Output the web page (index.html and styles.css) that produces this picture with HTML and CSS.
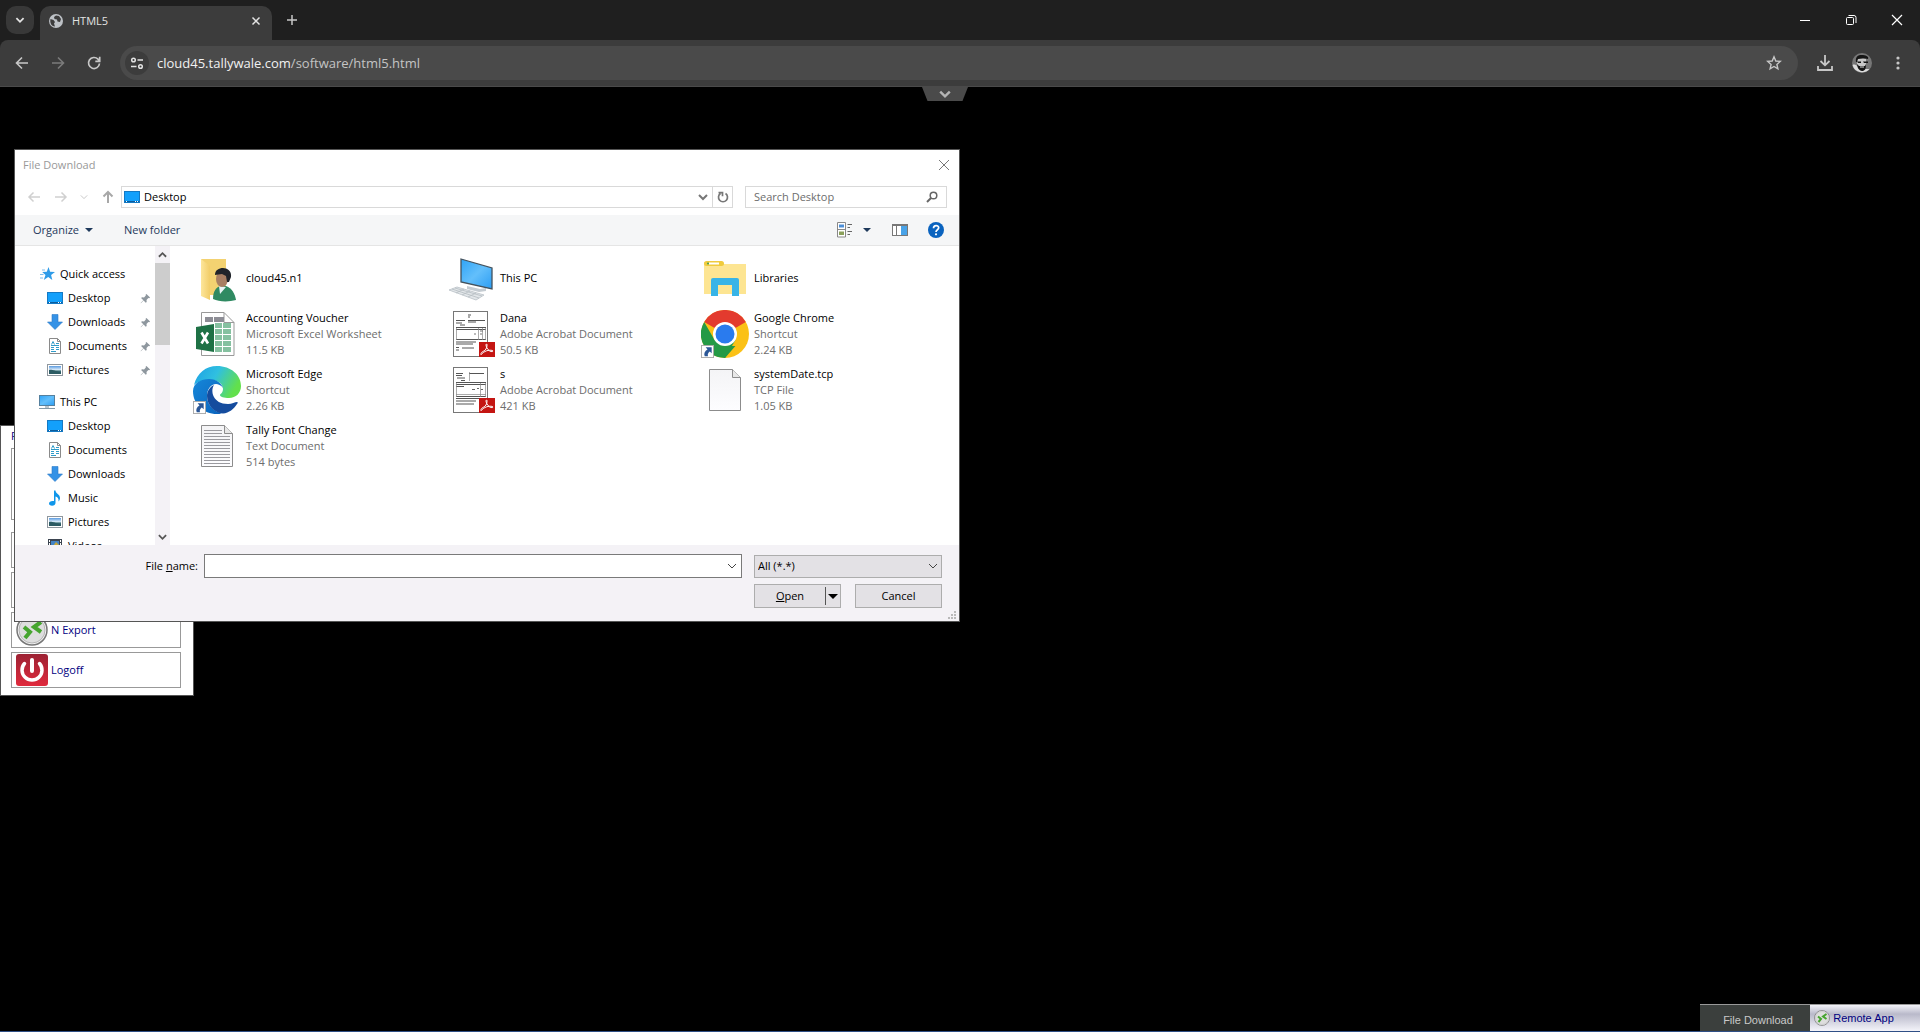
FILE: index.html
```html
<!DOCTYPE html>
<html lang="en">
<head>
    <meta charset="UTF-8">
    <meta name="viewport" content="width=device-width, initial-scale=1.0">
    <title>HTML5</title>
    <link rel="stylesheet" href="styles.css">
</head>
<body>
    <!-- shared icons -->
    <svg class="sprite" aria-hidden="true">
        <defs>
            <linearGradient id="screen" x1="0" y1="0" x2="1" y2="1">
                <stop offset="0" stop-color="#2ea3f7"/><stop offset="0.5" stop-color="#63bffb"/><stop offset="1" stop-color="#2b9df4"/>
            </linearGradient>
            <linearGradient id="paper" x1="0" y1="0" x2="0" y2="1">
                <stop offset="0" stop-color="#f4f4f6"/><stop offset="1" stop-color="#fdfdff"/>
            </linearGradient>
            <linearGradient id="sky" x1="0" y1="0" x2="0" y2="1">
                <stop offset="0" stop-color="#5a9be0"/><stop offset="0.5" stop-color="#e4f1fb"/><stop offset="0.6" stop-color="#3f7479"/><stop offset="1" stop-color="#2a5068"/>
            </linearGradient>
            <linearGradient id="edgeTop" x1="0" y1="0" x2="1" y2="0.4">
                <stop offset="0" stop-color="#1c9fe6"/><stop offset="0.5" stop-color="#30c0e0"/><stop offset="1" stop-color="#62e04c"/>
            </linearGradient>
            <linearGradient id="edgeLeft" x1="0" y1="0" x2="1" y2="1">
                <stop offset="0" stop-color="#1687d9"/><stop offset="1" stop-color="#0a63bd"/>
            </linearGradient>
            <linearGradient id="redBox" x1="0" y1="0" x2="0" y2="1">
                <stop offset="0" stop-color="#9c2233"/><stop offset="1" stop-color="#e02a3d"/>
            </linearGradient>
            <linearGradient id="folder" x1="0" y1="0" x2="1" y2="0">
                <stop offset="0" stop-color="#fde69b"/><stop offset="1" stop-color="#f2cd68"/>
            </linearGradient>
        </defs>
        <symbol id="i-desktop" viewBox="0 0 16 16">
            <rect x="0.5" y="2.5" width="15" height="11" fill="#13a0fb" stroke="#1479c4"/>
            <path d="M1 12.5h14" stroke="#0c5c9c"/>
            <path d="M2 12.5h1M11 12.5h1M13 12.5h1" stroke="#fff"/>
        </symbol>
        <symbol id="i-download" viewBox="0 0 16 16">
            <path d="M5 0.5h6v7.5h4.5L8 15.5 0.5 8H5z" fill="#3592e6" stroke="#2b7ac8" stroke-width="0.6"/>
        </symbol>
        <symbol id="i-document" viewBox="0 0 16 16">
            <path d="M2.5 0.5h8l3 3v12h-11z" fill="#fff" stroke="#8a8a8a"/>
            <path d="M10.5 0.5v3h3" fill="none" stroke="#8a8a8a"/>
            <path d="M4.500 6.500l1.500-3 1.500 3M4 7.500h8M9 5.500h3M4 9.500h3M9 9.500h3M4 11.500h3M9 11.500h3M4 13.500h5" fill="none" stroke="#2f9bc9"/>
        </symbol>
        <symbol id="i-picture" viewBox="0 0 16 16">
            <rect x="0.5" y="2.5" width="15" height="11" fill="#fff" stroke="#8f979e"/>
            <rect x="2" y="4" width="12" height="8" fill="url(#sky)"/>
            <path d="M2 8c3-1 5 1 12 2v2H2z" fill="#2c5b63"/>
        </symbol>
        <symbol id="i-music" viewBox="0 0 16 16">
            <path d="M7 0.5h1.5c0 3 4.5 3.5 4.5 7.5 0 1.500-.6 2.500-1.500 3.500.5-3-1-4.500-3-5V13c0 1.500-1.500 2.700-3.400 2.700S2 14.800 2 13.500 3.500 11 5.500 11H7z" fill="#0f96ea"/>
        </symbol>
        <symbol id="i-video" viewBox="0 0 16 16">
            <rect x="1" y="1" width="14" height="14" fill="#3b4450"/>
            <rect x="4" y="3" width="8" height="10" fill="#4383c4"/><path d="M6 8l3-4 3 3v5H5z" fill="#c9a83a"/>
            <path d="M2.500 2v12M13.500 2v12" stroke="#fff" stroke-dasharray="2 1"/>
        </symbol>
        <symbol id="i-pc" viewBox="0 0 16 16">
            <rect x="0.5" y="1.5" width="15" height="10" fill="url(#screen)" stroke="#55809e"/>
            <path d="M6 12h4v2H6z" fill="#b8c4cc"/><path d="M0 14.500h16" stroke="#8299a8"/>
        </symbol>
        <symbol id="i-star" viewBox="0 0 16 16">
            <path d="M9.500 1l1.600 4.700 4.900.2-3.900 3 1.200 5.100-4.100-2.900L4.800 14l1.700-5-3.300-3 4.600-.3z" fill="#2e9be8"/>
            <path d="M3 4h3M1 8.500h3.500M1 12h3" stroke="#7ebdec"/>
        </symbol>
        <symbol id="i-pin" viewBox="0 0 12 12">
            <path d="M7 1l4 4-1 .8-.9-.3-2 2 .2 2.200-1 .9-2.400-2.400L1 11.200l-.3-.3 2.900-3L1.200 5.500l1-.9 2.200.2 2-2L6.100 2z" fill="#8e979e"/>
        </symbol>
        <symbol id="i-shortcut" viewBox="0 0 14 14">
            <rect x="0.5" y="0.5" width="13" height="13" fill="#fff" stroke="#a9a9a9"/>
            <path d="M5 2.500h6.500V9L9.500 7C7.500 8.500 7 10 7.500 12H4C2.800 9 4 6.500 7 4.800z" fill="#2b5797"/>
        </symbol>
        <symbol id="i-acrobat" viewBox="0 0 16 15">
            <rect width="16" height="15" fill="#c41512"/>
            <path d="M2 11.500c0-1.500 4-2.500 5-4.500S8.500 2 7.500 2s-.5 3 1.500 5.500S14 10 14 9 8 7.500 4.500 10.500 2 13 2 11.500z" fill="none" stroke="#fff"/>
        </symbol>
        <symbol id="i-remote" viewBox="0 0 32 32">
            <circle cx="16" cy="16" r="15" fill="#f3f3f3" stroke="#777" stroke-width="1.500"/>
            <circle cx="16" cy="16" r="13" fill="#dedede" stroke="#b5b5b5"/>
            <path d="M8 13l6 5-5 6M25 8l-7 5 7 5" fill="none" stroke="#46a52f" stroke-width="4"/>
        </symbol>
        <symbol id="i-chev" viewBox="0 0 10 10">
            <path d="M1 3l4 4 4-4" fill="none" stroke="currentColor"/>
        </symbol>
    </svg>

    <header class="browser">
        <div class="tab-strip">
            <button class="tab-search" aria-label="Search tabs"><svg width="12" height="12" viewBox="0 0 10 10"><path d="M2 3.500l3 3 3-3" fill="none" stroke="#e3e3e3" stroke-width="1.500"/></svg></button>
            <div class="tab">
                <svg width="16" height="16" viewBox="0 0 16 16">
                    <circle cx="8" cy="8" r="7" fill="#bdc1c6"/>
                    <path d="M2.500 6l3 1 1.500 2-1 1.500 1 3C4 13.500 1.500 10.500 2.500 6zM8 2.500l3 .5 2 3-1 3-2.500-.5L9 6.500 6.500 6 6 4z" fill="#3c3c3c"/>
                </svg>
                <span class="tab-title">HTML5</span>
                <button class="tab-close" aria-label="Close tab"><svg width="10" height="10" viewBox="0 0 10 10"><path d="M1.500 1.500l7 7M8.500 1.500l-7 7" stroke="#e3e3e3" stroke-width="1.500"/></svg></button>
            </div>
            <button class="new-tab" aria-label="New tab"><svg width="12" height="12" viewBox="0 0 12 12"><path d="M6 1v10M1 6h10" stroke="#c7c7c7" stroke-width="1.500"/></svg></button>
            <div class="window-buttons">
                <button aria-label="Minimize"><svg width="12" height="12" viewBox="0 0 12 12"><path d="M1 6.500h10" stroke="#fff"/></svg></button>
                <button aria-label="Restore"><svg width="12" height="12" viewBox="0 0 12 12"><rect x="1.5" y="3.5" width="7" height="7" rx="1" fill="none" stroke="#fff"/><path d="M3.500 1.500H9a2 2 0 0 1 2 2V9" fill="none" stroke="#fff"/></svg></button>
                <button aria-label="Close"><svg width="12" height="12" viewBox="0 0 12 12"><path d="M1 1l10 10M11 1L1 11" stroke="#fff" stroke-width="1.200"/></svg></button>
            </div>
        </div>
        <div class="toolbar">
            <button aria-label="Back"><svg width="16" height="16" viewBox="0 0 16 16"><path d="M14 8H3M8 2.500L2.500 8 8 13.500" fill="none" stroke="#c7c7c7" stroke-width="1.600"/></svg></button>
            <button aria-label="Forward"><svg width="16" height="16" viewBox="0 0 16 16"><path d="M2 8h11M8 2.500L13.500 8 8 13.500" fill="none" stroke="#7b7b7b" stroke-width="1.600"/></svg></button>
            <button aria-label="Reload"><svg width="16" height="16" viewBox="0 0 16 16"><path d="M13.500 8.500A5.500 5.500 0 1 1 12 4.200L13.500 6M13.700 1.800V6.300H9.300" fill="none" stroke="#c7c7c7" stroke-width="1.700"/></svg></button>
            <div class="omnibox">
                <button class="site-info" aria-label="View site information"><svg width="14" height="14" viewBox="0 0 14 14"><g fill="none" stroke="#e3e3e3" stroke-width="1.500"><circle cx="3.500" cy="4" r="1.800"/><path d="M7.500 4H13M1 10.500h5.500"/><circle cx="10.500" cy="10.500" r="1.800"/></g></svg></button>
                <a class="url" href="#">cloud45.tallywale.com<span>/software/html5.html</span></a>
                <button class="bookmark" aria-label="Bookmark this tab"><svg width="16" height="16" viewBox="0 0 16 16"><path d="M8 1.800l1.800 4.200 4.500.4-3.400 3 1 4.400L8 11.500l-3.900 2.300 1-4.400-3.400-3 4.500-.4z" fill="none" stroke="#c7c7c7" stroke-width="1.400"/></svg></button>
            </div>
            <div class="toolbar-end">
                <button aria-label="Downloads"><svg width="18" height="18" viewBox="0 0 18 18"><path d="M9 1v10M4.500 7L9 11.300 13.500 7M2 12v4h14v-4" fill="none" stroke="#c7c7c7" stroke-width="1.800"/></svg></button>
                <button aria-label="Profile"><svg width="20" height="20" viewBox="0 0 20 20">
                    <circle cx="10" cy="10" r="10" fill="#777"/>
                    <path d="M0.500 12c2-1 4 0 6 2l6 2 5 0a10 10 0 0 1-17-4z" fill="#dcdcdc"/>
                    <path d="M5 6h9v7l-3 3H8l-3-4z" fill="#c9c9c9"/>
                    <path d="M4 9C3 3 7 1.500 11 2c4 .5 6 2 5 4l-5-1-5 1-1 3zM5 8.500h4v1.500H6zM11 8.500h5v1.500h-4zM5 11l2 2h6l1-2c0 5-1 7-4 7s-5-4-5-7z" fill="#151515"/>
                    <path d="M8 14h4" stroke="#ddd"/>
                </svg></button>
                <button aria-label="Menu"><svg width="16" height="16" viewBox="0 0 16 16"><g fill="#c7c7c7"><circle cx="8" cy="3" r="1.600"/><circle cx="8" cy="8" r="1.600"/><circle cx="8" cy="13" r="1.600"/></g></svg></button>
            </div>
        </div>
    </header>

    <main class="remote-desktop">
        <button class="pull-tab" aria-label="Show menu"><svg width="12" height="12" viewBox="0 0 10 10"><path d="M1 3l4 4 4-4" fill="none" stroke="#b5b5b5" stroke-width="2"/></svg></button>

        <section class="launcher">
            <p>Remote App</p>
            <div class="launcher-logo"></div>
            <button></button>
            <button></button>
            <button><svg width="32" height="32"><use href="#i-remote"/></svg>N Export</button>
            <button><svg width="32" height="32" viewBox="0 0 32 32"><rect width="32" height="32" rx="3" fill="url(#redBox)"/><path d="M8.500 9.500a10 10 0 1 0 15 0" fill="none" stroke="#fff" stroke-width="3.500" stroke-linecap="round"/><path d="M16 6v11" stroke="#fff" stroke-width="4" stroke-linecap="round"/></svg>Logoff</button>
        </section>

        <section class="dialog">
            <div class="title-bar">
                <h1>File Download</h1>
                <button aria-label="Close dialog"><svg width="12" height="12" viewBox="0 0 12 12"><path d="M1 1l10 10M11 1L1 11" stroke="#777"/></svg></button>
            </div>

            <div class="location-row">
                <div class="history">
                    <button aria-label="Back"><svg width="14" height="14" viewBox="0 0 14 14"><path d="M13 7H2M6.500 2.500L2 7l4.500 4.500" fill="none" stroke="#d0d0d0" stroke-width="1.500"/></svg></button>
                    <button aria-label="Forward"><svg width="14" height="14" viewBox="0 0 14 14"><path d="M1 7h11M7.500 2.500L12 7l-4.500 4.500" fill="none" stroke="#d0d0d0" stroke-width="1.500"/></svg></button>
                    <button aria-label="Recent locations"><svg class="faint" width="8" height="8"><use href="#i-chev"/></svg></button>
                    <button aria-label="Up"><svg width="14" height="14" viewBox="0 0 14 14"><path d="M7 13V2M2.500 6.500L7 2l4.500 4.500" fill="none" stroke="#a8a8a8" stroke-width="2"/></svg></button>
                </div>
                <div class="address">
                    <svg width="16" height="16"><use href="#i-desktop"/></svg>
                    <span>Desktop</span>
                    <button class="address-drop" aria-label="Previous locations"><svg width="10" height="10" viewBox="0 0 10 10"><path d="M1 3l4 4 4-4" fill="none" stroke="#777" stroke-width="2"/></svg></button>
                    <button class="refresh" aria-label="Refresh"><svg width="12" height="12" viewBox="0 0 12 12"><path d="M3.500 2.500A4.500 4.500 0 1 0 8.500 2.500M1.500 1.700h4v3.500" fill="none" stroke="#777" stroke-width="1.700"/></svg></button>
                </div>
                <div class="search">
                    <input type="text" aria-label="Search Desktop" placeholder="Search Desktop">
                    <svg width="12" height="12" viewBox="0 0 12 12"><circle cx="7.500" cy="4.500" r="3.300" fill="none" stroke="#666" stroke-width="1.500"/><path d="M5 7L1 11" stroke="#666" stroke-width="2"/></svg>
                </div>
            </div>

            <div class="command-bar">
                <button>Organize <span class="caret"></span></button>
                <button>New folder</button>
                <div class="view-buttons">
                    <button class="view-mode" aria-label="Change your view">
                        <svg width="16" height="16" viewBox="0 0 16 16"><path d="M.5.500h8v14.500h-8zM.5 7.500h8" fill="#fff" stroke="#888"/><path d="M2 2.500h5v3H2z" fill="#4c8fd8"/><path d="M2 9.500h5v3.500H2z" fill="#8aa05a"/><path d="M10.500 2.500H15M10.500 5.500H13M10.500 9.500H15M10.500 12.500H13" stroke="#666"/></svg>
                        <span class="caret"></span>
                    </button>
                    <button aria-label="Preview pane"><svg width="16" height="16" viewBox="0 0 16 16"><rect x=".5" y="2.5" width="15" height="11" fill="#fff" stroke="#777"/><path d="M1 3.500h14M4.500 4v9" stroke="#777"/><path d="M9 4h6v9H9z" fill="#49a3e8"/></svg></button>
                    <button aria-label="Help"><svg width="16" height="16" viewBox="0 0 16 16"><circle cx="8" cy="8" r="8" fill="#0a63bf"/><path d="M5.500 6.200c0-3.500 5.200-3.300 5.200-.4C10.700 7.800 8 7.700 8 10" fill="none" stroke="#fff" stroke-width="1.700"/><circle cx="8" cy="12.300" r="1.100" fill="#fff"/></svg></button>
                </div>
            </div>

            <div class="panes">
                <nav class="tree">
                    <ul>
                        <li class="root"><svg width="16" height="16"><use href="#i-star"/></svg>Quick access</li>
                        <li><svg width="16" height="16"><use href="#i-desktop"/></svg>Desktop<svg class="pin" width="11" height="11"><use href="#i-pin"/></svg></li>
                        <li><svg width="16" height="16"><use href="#i-download"/></svg>Downloads<svg class="pin" width="11" height="11"><use href="#i-pin"/></svg></li>
                        <li><svg width="16" height="16"><use href="#i-document"/></svg>Documents<svg class="pin" width="11" height="11"><use href="#i-pin"/></svg></li>
                        <li><svg width="16" height="16"><use href="#i-picture"/></svg>Pictures<svg class="pin" width="11" height="11"><use href="#i-pin"/></svg></li>
                    </ul>
                    <ul>
                        <li class="root"><svg width="16" height="16"><use href="#i-pc"/></svg>This PC</li>
                        <li><svg width="16" height="16"><use href="#i-desktop"/></svg>Desktop</li>
                        <li><svg width="16" height="16"><use href="#i-document"/></svg>Documents</li>
                        <li><svg width="16" height="16"><use href="#i-download"/></svg>Downloads</li>
                        <li><svg width="16" height="16"><use href="#i-music"/></svg>Music</li>
                        <li><svg width="16" height="16"><use href="#i-picture"/></svg>Pictures</li>
                        <li><svg width="16" height="16"><use href="#i-video"/></svg>Videos</li>
                    </ul>
                </nav>
                <div class="scrollbar">
                    <svg width="9" height="17" viewBox="0 0 10 17"><path d="M1 11l4-4 4 4" fill="none" stroke="#555" stroke-width="2"/></svg>
                    <div class="thumb"></div>
                    <svg width="9" height="16" viewBox="0 0 10 16"><path d="M1 6l4 4 4-4" fill="none" stroke="#555" stroke-width="2"/></svg>
                </div>

                <ul class="files">
                    <li>
                        <svg width="48" height="48" viewBox="0 0 48 48">
                            <path d="M8 5h25v36H17z" fill="#f3d271"/><path d="M8 5l9 7v34l-9-4z" fill="url(#folder)"/>
                            <path d="M20 45c0-8 3-12 8-13h5c6 2 9 8 10 14-7 2-17 2-23-1z" fill="#2f8a62"/>
                            <path d="M26 32l1 8 6-7z" fill="#e8f3f4"/>
                            <ellipse cx="29" cy="25" rx="6" ry="8" fill="#a87f63"/>
                            <path d="M22 21c0-5 4-7 8-7s9 3 8 9l-2 5-2 0-1-6-4-2z" fill="#20242a"/>
                        </svg>
                        <p><b>cloud45.n1</b></p>
                    </li>
                    <li>
                        <svg width="48" height="48" viewBox="0 0 48 48">
                            <path d="M20 32l13 3 6-1v3l-7 1-12-3z" fill="#c5ccd2"/>
                            <path d="M14 5l31 9v21l-31-7z" fill="url(#screen)" stroke="#44525d" stroke-width="1.300"/>
                            <path d="M2 36l8-3 27 8-8 5z" fill="#e2e6e9" stroke="#b9c0c6" stroke-width=".8"/>
                            <path d="M5 35l27 9M8 34l27 8M9 39l8-4M15 41l8-4M21 43l8-4" stroke="#b5bcc2" stroke-width=".8"/>
                        </svg>
                        <p><b>This PC</b></p>
                    </li>
                    <li>
                        <svg width="48" height="48" viewBox="0 0 48 48">
                            <path d="M3 8h18l2 2h22v30H3z" fill="#fde592"/>
                            <rect x="3" y="7" width="20" height="5" rx="2.5" fill="#f0cb3d"/><path d="M8 9.500h10" stroke="#fff" stroke-width="2"/><circle cx="7" cy="9.500" r="1" fill="#3b9c5a"/>
                            <path d="M10 42V26q0-2 2-2h24q2 0 2 2v16h-7V31H17v11z" fill="#37b4e7"/>
                        </svg>
                        <p><b>Libraries</b></p>
                    </li>
                    <li>
                        <svg width="48" height="48" viewBox="0 0 48 48">
                            <path d="M8.500 2.500H31l10 10v33H8.500z" fill="#fff" stroke="#999"/><path d="M31 2.500v10h10" fill="none" stroke="#999"/>
                            <path d="M12 7h8v5h-8zM21 7h10v5H21z" fill="#8d8d95"/>
                            <path d="M22 13h7v5h-7zM30 13h8v5h-8zM22 19h7v5h-7zM30 19h8v5h-8zM22 25h7v5h-7zM30 25h8v5h-8zM22 31h7v5h-7zM30 31h8v5h-8zM22 37h7v5h-7zM30 37h8v5h-8z" fill="#85c1a0"/>
                            <path d="M3 17l18-3v28L3 39z" fill="#1e7145"/>
                            <path d="M8.500 22.500l6.500 11M15 22.500l-6.500 11" stroke="#fff" stroke-width="2.600"/>
                        </svg>
                        <p><b>Accounting Voucher</b><br>Microsoft Excel Worksheet<br>11.5 KB</p>
                    </li>
                    <li>
                        <svg width="48" height="48" viewBox="0 0 48 48">
                            <rect x="6.5" y="1.5" width="34" height="45" fill="#fff" stroke="#777"/>
                            <path d="M21 5h3M21 7h2M9 10.500h9M21 10.500h17M9 13h6M13 15h5M21 12h8M9 17.500h30M9 19.500h30M9 29.500h30M9 32h20M9 34h17M9 37.500h3M15 38h12M9 40h3" stroke="#555"/>
                            <path d="M9.500 18v12M31.500 18v12M35.500 18v12M38.500 18v12" stroke="#888" stroke-width=".7"/>
                            <path d="M27 24h2M33 24h2M33 21h3" stroke="#777"/>
                            <use href="#i-acrobat" x="32" y="32" width="16" height="15"/>
                        </svg>
                        <p><b>Dana</b><br>Adobe Acrobat Document<br>50.5 KB</p>
                    </li>
                    <li>
                        <svg width="48" height="48" viewBox="0 0 48 48">
                            <circle cx="24" cy="24" r="24" fill="#fbc116"/>
                            <path d="M24 24L3.200 12A24 24 0 0 1 44.800 12z" fill="#e33b2e"/>
                            <path d="M3.200 12L13.600 30 24 36h10.400L24 48A24 24 0 0 1 3.200 12z" fill="#249a46"/>
                            <path d="M24 48l10.400-18L24 30l-6 12z" fill="#249a46"/>
                            <circle cx="24" cy="24" r="12" fill="#fff"/><circle cx="24" cy="24" r="9.500" fill="#2a7bee"/>
                            <use href="#i-shortcut" x="0" y="35" width="13" height="13"/>
                        </svg>
                        <p><b>Google Chrome</b><br>Shortcut<br>2.24 KB</p>
                    </li>
                    <li>
                        <svg width="48" height="48" viewBox="0 0 48 48">
                            <path d="M1 19C4 7 13 0 24 0c14 0 24 9 24 20 0 7-5 12-12 12-5 0-9-1-9-3 0-1 3-2 3-6 0-5-5-9-12-9C10 14 4 16 1 19z" fill="url(#edgeTop)"/>
                            <path d="M0 25c0-8 8-12 16-12 8 0 13 5 14 9-2-3-5-4-7-4-5 0-9 5-9 12 0 9 7 16 15 17-2 1-3 1-5 1C10 48 0 38 0 25z" fill="url(#edgeLeft)"/>
                            <path d="M14 30c0-5 3-9 7-11-4 6-1 19 14 19 4 0 7-2 9-2 1 0 1 1 0 2-3 5-8 9-14 9.500C21 47 14 39 14 30z" fill="#154c9e"/>
                            <use href="#i-shortcut" x="0" y="35" width="13" height="13"/>
                        </svg>
                        <p><b>Microsoft Edge</b><br>Shortcut<br>2.26 KB</p>
                    </li>
                    <li>
                        <svg width="48" height="48" viewBox="0 0 48 48">
                            <rect x="6.5" y="1.5" width="34" height="45" fill="#fff" stroke="#777"/>
                            <path d="M9 7.500h7M22 7.500h15M9 9.500h6M10 12h8M14 14.500h4M9 16.500h30M9 18.500h30M9 20.500h8M9 30.500h30M9 32.500h28M9 35h20M9 38h18" stroke="#555"/>
                            <path d="M9.500 17v14M22.500 6v9M33.500 17v14M38.500 17v14M9 28.500h30" stroke="#888" stroke-width=".7"/>
                            <path d="M25 23.500h3M30 22.500h2M34 23.500h2" stroke="#666"/>
                            <use href="#i-acrobat" x="32" y="32" width="16" height="15"/>
                        </svg>
                        <p><b>s</b><br>Adobe Acrobat Document<br>421 KB</p>
                    </li>
                    <li>
                        <svg width="48" height="48" viewBox="0 0 48 48">
                            <path d="M8.500 3.500h23l8 8v33h-31z" fill="url(#paper)" stroke="#8c8c8c"/><path d="M31.500 3.500v8h8" fill="#e8e8e8" stroke="#8c8c8c"/>
                        </svg>
                        <p><b>systemDate.tcp</b><br>TCP File<br>1.05 KB</p>
                    </li>
                    <li>
                        <svg width="48" height="48" viewBox="0 0 48 48">
                            <path d="M8.500 3.500h23l8 8v33h-31z" fill="url(#paper)" stroke="#8c8c8c"/><path d="M31.500 3.500v8h8" fill="#e8e8e8" stroke="#8c8c8c"/>
                            <path d="M11 8.500h18M11 11.500h18M11 14.500h26M11 17.500h26M11 20.500h26M11 23.500h26M11 26.500h26M11 29.500h26M11 32.500h26M11 35.500h26M11 38.500h26M11 41.500h26" stroke="#9a9a9f"/>
                        </svg>
                        <p><b>Tally Font Change</b><br>Text Document<br>514 bytes</p>
                    </li>
                </ul>
            </div>

            <form class="dialog-footer">
                <label for="fileName">File <u>n</u>ame:</label>
                <div class="combo">
                    <input type="text" id="fileName">
                    <button type="button" aria-label="Show file names"><svg width="10" height="10"><use href="#i-chev"/></svg></button>
                </div>
                <div class="file-type">
                    <select aria-label="File type"><option>All (*.*)</option></select>
                    <svg width="10" height="10"><use href="#i-chev"/></svg>
                </div>
                <div class="actions">
                    <button type="button" class="open"><span><u>O</u>pen</span><i></i></button>
                    <button type="button">Cancel</button>
                </div>
                <svg class="grip" width="8" height="8" viewBox="0 0 8 8"><path d="M6 0h2v2H6zM3 3h2v2H3zM6 3h2v2H6zM0 6h2v2H0zM3 6h2v2H3zM6 6h2v2H6z" fill="#b9b9b9"/></svg>
            </form>
        </section>

        <footer class="taskbar">
            <button class="active">File Download</button>
            <button><svg width="16" height="16"><use href="#i-remote"/></svg>Remote App</button>
        </footer>
    </main>
</body>
</html>
```

FILE: styles.css
```css
* {
    box-sizing: border-box;
}
body {
    margin: 0;
    min-height: 100vh;
    display: flex;
    flex-direction: column;
    background: #000;
    font-family: "Open Sans", "Noto Sans", sans-serif;
    font-size: 11px;
    line-height: 16px;
}
button, input, select {
    font: inherit;
    color: inherit;
    margin: 0;
    padding: 0;
    border: 0;
    background: none;
}
button {
    display: flex;
    align-items: center;
    justify-content: center;
}
ul, p, h1 {
    margin: 0;
    padding: 0;
    list-style: none;
}
svg {
    flex: none;
}
.sprite {
    position: absolute;
    width: 0;
    height: 0;
}

/* browser */
.browser {
    background: #1f1f1f;
    color: #e3e3e3;
}
.tab-strip {
    display: flex;
    align-items: center;
    height: 40px;
    padding-left: 6px;
}
.tab-search {
    width: 28px;
    height: 28px;
    border-radius: 10px;
    background: #383838;
    margin-right: 6px;
}
.tab {
    display: flex;
    align-items: center;
    align-self: flex-end;
    gap: 8px;
    width: 232px;
    height: 34px;
    padding: 0 10px 4px 8px;
    border-radius: 10px 10px 0 0;
    background: #3c3c3c;
}
.tab-title {
    flex: 1;
}
.tab-close, .new-tab {
    width: 12px;
    height: 20px;
}
.new-tab {
    margin-left: 14px;
}
.window-buttons {
    display: flex;
    margin-left: auto;
}
.window-buttons button {
    width: 46px;
    height: 40px;
}
.toolbar {
    display: flex;
    align-items: center;
    height: 46px;
    padding: 0 14px;
    gap: 20px;
    background: #3c3c3c;
    border-radius: 8px 8px 0 0;
}
.omnibox {
    flex: 1;
    display: flex;
    align-items: center;
    height: 34px;
    margin-left: -2px;
    margin-right: -2px;
    padding: 0 16px 0 5px;
    border-radius: 17px;
    background: #4a4a4a;
}
.toolbar-end {
    display: flex;
    align-items: center;
    gap: 18px;
}
.site-info {
    width: 24px;
    height: 24px;
    border-radius: 50%;
    background: #3c3c3c;
}
.url {
    flex: 1;
    margin-left: 8px;
    font-size: 13px;
    color: #f1f1f1;
    text-decoration: none;
}
.url span {
    color: #c4c4c4;
}

/* remote desktop */
.remote-desktop {
    position: relative;
    flex: 1;
    border-top: 1px solid #4a4a4a;
    border-bottom: 1px solid #2f4f86;
}
.pull-tab {
    width: 46px;
    height: 14px;
    margin: 0 auto;
    background: #4a4a4a;
    clip-path: polygon(0 0, 100% 0, 88% 100%, 12% 100%);
    position: relative;
    left: -15px;
}
.launcher {
    position: absolute;
    left: 0;
    top: 338px;
    width: 194px;
    padding: 2px 12px 7px 10px;
    display: flex;
    flex-direction: column;
    gap: 4px;
    background: #fff;
    border: 1px solid #555;
    color: #00007f;
}
.launcher-logo {
    height: 72px;
    margin-bottom: 8px;
    border: 1px solid #999;
}
.launcher button {
    justify-content: flex-start;
    gap: 3px;
    height: 36px;
    padding: 0 4px;
    border: 1px solid #999;
}

/* file dialog */
.dialog {
    position: absolute;
    left: 14px;
    top: 62px;
    width: 946px;
    background: #fff;
    border: 1px solid #555;
    color: #000;
}
.title-bar {
    display: flex;
    align-items: center;
    justify-content: space-between;
    height: 29px;
    padding: 0 9px 0 8px;
    color: #999;
}
.title-bar h1 {
    font-size: 11px;
    font-weight: normal;
}
.location-row {
    display: flex;
    align-items: center;
    padding: 7px 12px;
}
.history {
    display: flex;
    justify-content: space-between;
    width: 88px;
    margin-right: 6px;
}
.faint {
    color: #bbb;
}
.address {
    flex: 1;
    display: flex;
    align-items: center;
    gap: 4px;
    height: 22px;
    padding-left: 2px;
    border: 1px solid #d9d9d9;
}
.address-drop {
    width: 18px;
    height: 20px;
    margin-left: auto;
}
.refresh {
    width: 20px;
    height: 20px;
    margin-left: -4px;
    border-left: 1px solid #d9d9d9;
}
.search {
    display: flex;
    align-items: center;
    width: 202px;
    height: 22px;
    margin-left: 12px;
    padding: 0 8px;
    border: 1px solid #d9d9d9;
}
.search input {
    flex: 1;
    min-width: 0;
}
.search input::placeholder {
    color: #6d6d6d;
}
.command-bar {
    display: flex;
    align-items: center;
    gap: 31px;
    height: 31px;
    padding: 0 15px 0 18px;
    background: #f5f6f7;
    border-bottom: 1px solid #e5e5e5;
    color: #1e395b;
}
.command-bar button {
    gap: 6px;
}
.caret {
    border: 4px solid transparent;
    border-top-color: #1e395b;
    border-bottom: 0;
}
.view-buttons {
    display: flex;
    gap: 20px;
    margin-left: auto;
}
.view-buttons .view-mode {
    gap: 10px;
    margin-right: 1px;
}
.panes {
    display: flex;
    height: 299px;
}
.tree {
    width: 140px;
    padding: 16px 4px 0 24px;
    overflow: hidden;
}
.tree ul + ul {
    margin-top: 8px;
}
.tree li {
    display: flex;
    align-items: center;
    gap: 5px;
    height: 24px;
    padding-left: 8px;
}
.tree .root {
    padding-left: 0;
}
.pin {
    margin-left: auto;
}
.scrollbar {
    display: flex;
    flex-direction: column;
    align-items: center;
    justify-content: space-between;
    width: 15px;
    background: #f4f2f6;
}
.thumb {
    width: 100%;
    height: 82px;
    margin-bottom: auto;
    background: #cdcdcd;
}
.files {
    flex: 1;
    display: grid;
    grid-template-columns: repeat(3, 1fr);
    grid-auto-rows: 56px;
    padding: 4px 4px 0 23px;
}
.files li {
    display: flex;
    align-items: center;
    gap: 5px;
    color: #6d6d6d;
}
.files b {
    font-weight: normal;
    color: #000;
}
.dialog-footer {
    display: grid;
    grid-template-columns: 183px 1fr 188px;
    align-items: center;
    gap: 6px 12px;
    padding: 9px 17px 13px 0;
    background: #f4f2f6;
    position: relative;
}
.dialog-footer label {
    justify-self: end;
}
.combo {
    display: flex;
    height: 24px;
    margin-left: -6px;
    background: #fff;
    border: 1px solid #7a7a7a;
    color: #444;
}
.combo input {
    flex: 1;
    padding: 0 4px;
}
.combo button {
    width: 18px;
}
.file-type {
    display: grid;
    align-items: center;
}
.file-type select, .file-type svg {
    grid-area: 1 / 1;
}
.file-type select {
    appearance: none;
    height: 23px;
    padding: 0 3px;
    background: #e3e1e5;
    border: 1px solid #adadad;
}
.file-type svg {
    justify-self: end;
    margin-right: 4px;
    color: #444;
    pointer-events: none;
}
.actions {
    grid-column: 3;
    display: flex;
    gap: 14px;
}
.actions button {
    flex: 1;
    height: 24px;
    background: #e3e1e5;
    border: 1px solid #adadad;
}
.open span {
    flex: 1;
}
.open i {
    height: 18px;
    padding: 7px 2px 0;
    border-left: 1px solid #555;
}
.open i::after {
    content: "";
    display: block;
    border: 5px solid transparent;
    border-top-color: #000;
    border-bottom: 0;
}
.grip {
    position: absolute;
    right: 3px;
    bottom: 2px;
}

/* taskbar */
.taskbar {
    position: absolute;
    right: 0;
    bottom: 0;
    display: flex;
    font-family: "Liberation Sans", Arial, sans-serif;
}
.taskbar button {
    gap: 3px;
    width: 110px;
    height: 27px;
    padding-right: 22px;
    background: linear-gradient(#f4f4fa, #b9b9ca 35%, #f4f4fa);
    border-top: 1px solid #999;
    color: #00007f;
}
.taskbar .active {
    padding: 4px 0 0 6px;
    background: #3b3f3d;
    color: #c9c9c9;
}
```
